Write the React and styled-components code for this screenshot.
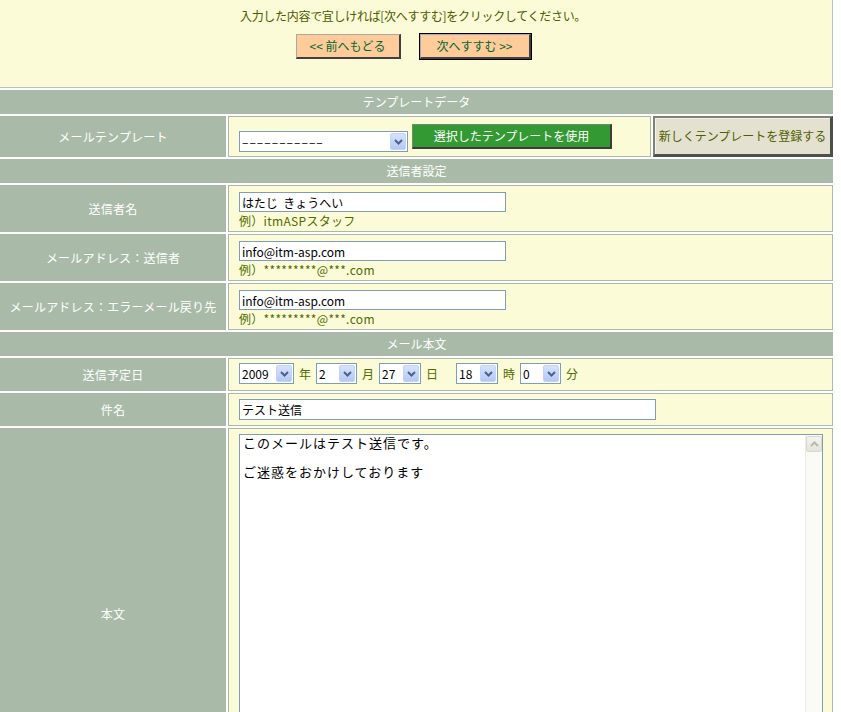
import React from 'react';
import styled, { createGlobalStyle } from 'styled-components';

const GlobalStyle = createGlobalStyle`
  body {
    margin: 0;
    background: #ffffff;
    font-family: "Noto Sans CJK JP", "Noto Sans", sans-serif;
    font-size: 12px;
  }
`;

const Page = styled.div`
  width: 833px;
`;

const TopBox = styled.div`
  box-sizing: border-box;
  height: 88px;
  background: #fbfbd7;
  border-right: 1px solid #b7c3b5;
  border-bottom: 1px solid #b7c3b5;
  display: flex;
  flex-direction: column;
  align-items: center;
  padding-top: 8px;
  padding-right: 6px;
`;

const Notice = styled.div`
  color: #4b5a00;
  font-size: 12px;
  line-height: 16px;
  letter-spacing: -0.3px;
`;

const ButtonRow = styled.div`
  display: flex;
  gap: 19px;
  margin-top: 10px;
`;

const PageButton = styled.button`
  box-sizing: border-box;
  width: ${p => p.$w}px;
  height: 25px;
  background: #ffcc99;
  color: #006633;
  font-family: inherit;
  font-size: 12px;
  padding: 0 0 1px;
  border-style: solid;
  border-width: 1px 2px 2px 1px;
  border-color: #a8a8a8 #404040 #404040 #a8a8a8;
  outline: ${p => (p.$primary ? '1px solid #000' : 'none')};
  outline-offset: 0;
`;

const FormGrid = styled.div`
  display: grid;
  grid-template-columns: 226px 605px;
  column-gap: 2px;
  row-gap: 2px;
  padding-top: 2px;
  background: #ffffff;
`;

const SectionHead = styled.div`
  grid-column: 1 / -1;
  box-sizing: border-box;
  height: 24px;
  padding-bottom: 2px;
  background: #a9bba8;
  color: #ffffff;
  display: flex;
  align-items: center;
  justify-content: center;
`;

const Label = styled.div`
  padding-bottom: 1px;
  background: #a9bba8;
  color: #ffffff;
  display: flex;
  align-items: center;
  justify-content: center;
  letter-spacing: 0.2px;
`;

const Value = styled.div`
  box-sizing: border-box;
  height: ${p => p.$h}px;
  background: #fbfbd7;
  border: 1px solid #a9bba8;
  padding: ${p => p.$pt}px 10px 0 10px;
  display: flex;
  flex-direction: ${p => (p.$row ? 'row' : 'column')};
  align-items: flex-start;
`;

const TemplateCells = styled.div`
  display: flex;
  gap: 2px;
  & > :first-child {
    flex: 1;
  }
`;

const NewTemplateButton = styled.button`
  box-sizing: border-box;
  width: 180px;
  height: 41px;
  background: #e5e1d0;
  color: #505f00;
  font-family: inherit;
  font-size: 12px;
  padding: 0 0 1px;
  border-style: solid;
  border-width: 2px 3px 3px 2px;
  border-color: #7c847a #4a5248 #4a5248 #7c847a;
  box-shadow: inset 1px 1px 0 #f4f2ea;
`;

const UseButton = styled.button`
  box-sizing: border-box;
  width: 200px;
  height: 25px;
  margin-left: 4px;
  background: #339933;
  color: #ffffff;
  font-family: inherit;
  font-size: 12px;
  padding: 0 0 1px;
  border-style: solid;
  border-width: 1px 2px 2px 1px;
  border-color: #6a8f6a #3a3d3a #3a3d3a #6a8f6a;
`;

const TextInput = styled.input`
  box-sizing: border-box;
  width: ${p => p.$w}px;
  height: ${p => p.$h || 20}px;
  border: 1px solid #7f9db9;
  background: #ffffff;
  padding: 0 2px;
  margin: 0;
  font-family: inherit;
  font-size: 12px;
  color: #000;
  outline: none;
`;

const Hint = styled.div`
  margin-top: 2px;
  color: #4f6b00;
  font-size: 12px;
  line-height: 13px;
  letter-spacing: 0.3px;
`;

const SelectBox = styled.span`
  box-sizing: border-box;
  display: inline-flex;
  width: ${p => p.$w}px;
  height: 21px;
  margin-top: ${p => p.$mt || 0}px;
  border: 1px solid #7f9db9;
  background: #ffffff;
  padding: 1px;
`;

const SelectText = styled.span`
  flex: 1;
  padding-left: 1px;
  color: #000;
  font-size: 12px;
  line-height: 17px;
  letter-spacing: ${p => p.$ls || 0}px;
  overflow: hidden;
  white-space: nowrap;
`;

const SelectArrow = styled.span`
  box-sizing: border-box;
  width: 16px;
  display: flex;
  align-items: center;
  justify-content: center;
  background: linear-gradient(#d6e2fe, #b4c8f6);
  border: 1px solid #c3d3fb;
  border-radius: 2px;
`;

const Unit = styled.span`
  color: #4f6b00;
  font-size: 12px;
  line-height: 21px;
  margin: 0 ${p => p.$mr || 5}px 0 5px;
`;

const MemoBox = styled.div`
  box-sizing: border-box;
  width: 584px;
  height: 360px;
  border: 1px solid #7f9db9;
  background: #ffffff;
  display: flex;
`;

const MemoText = styled.div`
  flex: 1;
  padding: 1px 3px;
  font-size: 13px;
  line-height: 14.5px;
  letter-spacing: 1px;
  color: #000;
  white-space: pre-wrap;
`;

const ScrollTrack = styled.div`
  width: 16px;
  background: #fafaf6;
  border-left: 1px solid #ecece4;
  padding-top: 1px;
`;

const ScrollButton = styled.div`
  box-sizing: border-box;
  width: 16px;
  height: 16px;
  background: linear-gradient(#f4f4ee, #e4e4da);
  border: 1px solid #d8d8ce;
  border-radius: 2px;
  display: flex;
  align-items: center;
  justify-content: center;
`;

const Chevron = ({ up, color = '#4d6185' }) => (
  <svg width="9" height="6" viewBox="0 0 9 6">
    <path
      d={up ? 'M1 5 L4.5 1.5 L8 5' : 'M1 1 L4.5 4.5 L8 1'}
      stroke={color}
      strokeWidth="2"
      fill="none"
    />
  </svg>
);

const Select = ({ w, value, mt, ls }) => (
  <SelectBox $w={w} $mt={mt}>
    <SelectText $ls={ls}>{value}</SelectText>
    <SelectArrow>
      <Chevron />
    </SelectArrow>
  </SelectBox>
);

export default function App() {
  return (
    <Page>
      <GlobalStyle />
      <TopBox>
        <Notice>入力した内容で宜しければ[次へすすむ]をクリックしてください。</Notice>
        <ButtonRow>
          <PageButton $w={105}>&lt;&lt; 前へもどる</PageButton>
          <PageButton $w={111} $primary>次へすすむ &gt;&gt;</PageButton>
        </ButtonRow>
      </TopBox>
      <FormGrid>
        <SectionHead>テンプレートデータ</SectionHead>
        <Label>メールテンプレート</Label>
        <TemplateCells>
          <Value $h={41} $pt={7} $row>
            <Select w={169} value="–––––––––––" mt={7} ls={1} />
            <UseButton>選択したテンプレートを使用</UseButton>
          </Value>
          <NewTemplateButton>新しくテンプレートを登録する</NewTemplateButton>
        </TemplateCells>

        <SectionHead>送信者設定</SectionHead>
        <Label>送信者名</Label>
        <Value $h={47} $pt={6}>
          <TextInput $w={267} readOnly value="はたじ  きょうへい" />
          <Hint>例）itmASPスタッフ</Hint>
        </Value>
        <Label>メールアドレス：送信者</Label>
        <Value $h={47} $pt={6}>
          <TextInput $w={267} readOnly value="info@itm-asp.com" />
          <Hint>例）*********@***.com</Hint>
        </Value>
        <Label>メールアドレス：エラーメール戻り先</Label>
        <Value $h={47} $pt={6}>
          <TextInput $w={267} readOnly value="info@itm-asp.com" />
          <Hint>例）*********@***.com</Hint>
        </Value>

        <SectionHead>メール本文</SectionHead>
        <Label>送信予定日</Label>
        <Value $h={33} $pt={4} $row>
          <Select w={55} value="2009" />
          <Unit>年</Unit>
          <Select w={41} value="2" />
          <Unit>月</Unit>
          <Select w={42} value="27" />
          <Unit $mr={18}>日</Unit>
          <Select w={42} value="18" />
          <Unit>時</Unit>
          <Select w={41} value="0" />
          <Unit>分</Unit>
        </Value>
        <Label>件名</Label>
        <Value $h={33} $pt={5}>
          <TextInput $w={417} $h={21} readOnly value="テスト送信" />
        </Value>
        <Label>本文</Label>
        <Value $h={372} $pt={5}>
          <MemoBox>
            <MemoText>{'このメールはテスト送信です。\n\nご迷惑をおかけしております'}</MemoText>
            <ScrollTrack>
              <ScrollButton>
                <Chevron up color="#b8b8ae" />
              </ScrollButton>
            </ScrollTrack>
          </MemoBox>
        </Value>
      </FormGrid>
    </Page>
  );
}
